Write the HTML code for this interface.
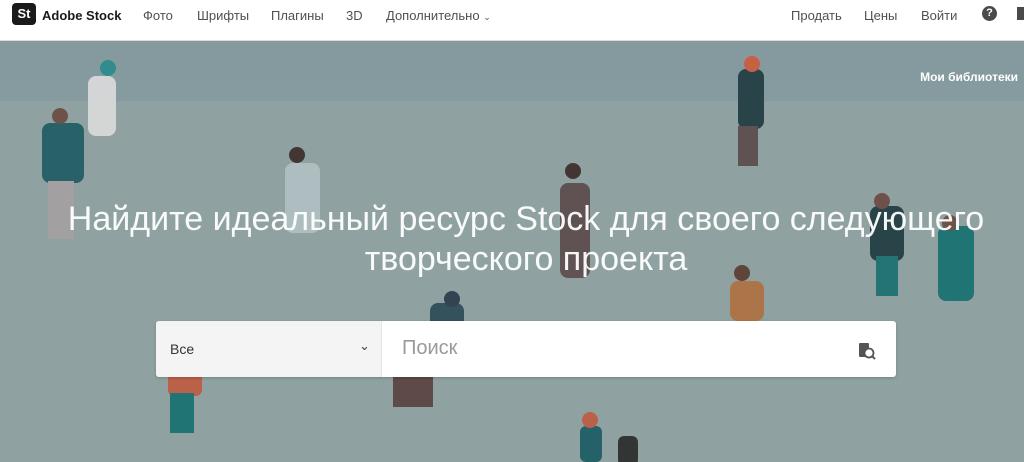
<!DOCTYPE html>
<html><head><meta charset="utf-8"><style>
*{margin:0;padding:0;box-sizing:border-box}
body{width:1024px;height:462px;overflow:hidden;font-family:"Liberation Sans","DejaVu Sans",sans-serif;background:#fff;position:relative}
.hdr{position:absolute;left:0;top:0;width:1024px;height:41px;background:#fff;border-bottom:1px solid #dcdcdc}
.logo{position:absolute;left:12px;top:3px;width:24px;height:22px;background:#1a1a1a;border-radius:4px;color:#fff;font-weight:bold;font-size:13px;line-height:22px;text-align:center}
.t{position:absolute;top:8px;font-size:13px;color:#505050}
.hero{position:absolute;left:0;top:41px;width:1024px;height:421px;background:#8fa2a1}
.band{position:absolute;left:0;top:0;width:1024px;height:60px;background:linear-gradient(#849a9e,#869b9f)}
h1{position:absolute;left:14px;top:158px;width:1024px;text-align:center;color:rgba(255,255,255,0.95);font-weight:normal;font-size:34px;line-height:40px;white-space:nowrap;font-family:"Liberation Sans",sans-serif;letter-spacing:0}
.sb{position:absolute;left:156px;top:321px;width:740px;height:56px;background:#fff;border-radius:3px;box-shadow:0 1px 3px rgba(0,0,0,.2)}
.sel{position:absolute;left:0;top:0;width:226px;height:56px;background:#f4f4f4;border-right:1px solid #e6e6e6;border-radius:3px 0 0 3px}
</style></head><body>
<div class="hdr">
<div class="logo">St</div>
<div class="t" style="left:42px;font-weight:bold;color:#1a1a1a">Adobe Stock</div>
<div class="t" style="left:143px">Фото</div>
<div class="t" style="left:197px">Шрифты</div>
<div class="t" style="left:271px">Плагины</div>
<div class="t" style="left:346px">3D</div>
<div class="t" style="left:386px">Дополнительно <span style="font-size:9px">⌄</span></div>
<div class="t" style="left:791px">Продать</div>
<div class="t" style="left:864px">Цены</div>
<div class="t" style="left:921px">Войти</div>
<div style="position:absolute;left:982px;top:6px;width:15px;height:15px;border-radius:50%;background:#4a4a4a;color:#fff;font-size:11px;font-weight:bold;text-align:center;line-height:15px">?</div>
<div style="position:absolute;left:1017px;top:7px;width:7px;height:13px;background:#4a4a4a"></div>
</div>
<div class="hero">
<div class="band"></div>
<svg width="1024" height="421" style="position:absolute;left:0;top:0">
<g opacity="0.9">
<rect x="88" y="35" width="28" height="60" rx="8" fill="#dcdcdc"/><circle cx="108" cy="27" r="8" fill="#2a8a8a"/>
<rect x="42" y="82" width="42" height="60" rx="8" fill="#1e5a62"/><circle cx="60" cy="75" r="8" fill="#6b4a40"/><rect x="48" y="140" width="26" height="58" fill="#a5a0a0"/>
<rect x="285" y="122" width="35" height="70" rx="8" fill="#b2c2c4"/><circle cx="297" cy="114" r="8" fill="#3a2a26"/>
<rect x="560" y="142" width="30" height="95" rx="8" fill="#5c4a4a"/><circle cx="573" cy="130" r="8" fill="#3a2a26"/>
<rect x="738" y="28" width="26" height="60" rx="8" fill="#1f3a40"/><circle cx="752" cy="23" r="8" fill="#d05a3a"/><rect x="738" y="85" width="20" height="40" fill="#5a4a4a"/>
<rect x="870" y="165" width="34" height="55" rx="8" fill="#1f3a40"/><circle cx="882" cy="160" r="8" fill="#6b4a40"/><rect x="876" y="215" width="22" height="40" fill="#1a7070"/>
<rect x="938" y="185" width="36" height="75" rx="8" fill="#147070"/><circle cx="950" cy="182" r="8" fill="#6b4a40"/>
<rect x="730" y="240" width="34" height="40" rx="8" fill="#b07040"/><circle cx="742" cy="232" r="8" fill="#5a3a30"/>
<rect x="430" y="262" width="34" height="60" rx="8" fill="#2a4a55"/><circle cx="452" cy="258" r="8" fill="#2a3a48"/>
<rect x="168" y="330" width="34" height="25" rx="6" fill="#c05a40"/><rect x="170" y="352" width="24" height="40" fill="#147070"/>
<rect x="393" y="336" width="40" height="30" fill="#5a4040"/>
<rect x="580" y="385" width="22" height="36" rx="6" fill="#1a5a62"/><circle cx="590" cy="379" r="8" fill="#c05a40"/>
<rect x="618" y="395" width="20" height="30" rx="6" fill="#2a2a2a"/>
</g>
<text x="1018" y="40" text-anchor="end" fill="#fff" font-size="12" font-weight="bold" font-family="Liberation Sans,sans-serif">Мои библиотеки</text>
</svg>
<h1>Найдите идеальный ресурс Stock для своего следующего<br>творческого проекта</h1>
</div>
<div class="sb">
<div class="sel"><span style="position:absolute;left:14px;top:20px;font-size:14px;color:#333">Все</span><span style="position:absolute;left:203px;top:17px;font-size:13px;color:#444">⌄</span></div>
<span style="position:absolute;left:246px;top:16px;font-size:20px;color:#9a9a9a">Поиск</span>
<svg width="18" height="18" viewBox="0 0 18 18" style="position:absolute;left:702px;top:21px"><rect x="1" y="1" width="10" height="14" rx="1" fill="#555"/><circle cx="11" cy="11" r="4.5" fill="#fff" stroke="#555" stroke-width="1.8"/><path d="M14 14l3 3" stroke="#555" stroke-width="2"/></svg>
</div>
</body></html>
